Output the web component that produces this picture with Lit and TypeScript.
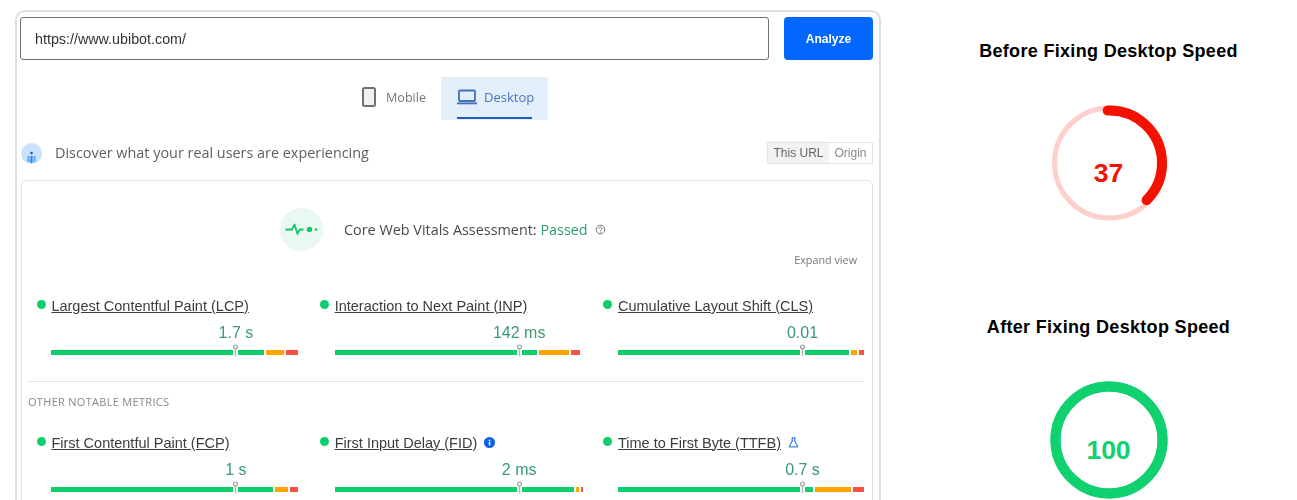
import { LitElement, html, css, svg, unsafeCSS } from 'lit';
import { customElement } from 'lit/decorators.js';

const GREEN = '#0cce6b';
const ORANGE = '#ffa400';
const RED = '#ff4e42';

type Metric = {
    label: string;
    value: string;
    segs: [number, number, number, number];
    badge?: 'info' | 'flask';
};

const coreMetrics: Metric[] = [
    { label: 'Largest Contentful Paint (LCP)', value: '1.7 s', segs: [182, 26, 18, 12] },
    { label: 'Interaction to Next Paint (INP)', value: '142 ms', segs: [182, 15, 30, 9] },
    { label: 'Cumulative Layout Shift (CLS)', value: '0.01', segs: [182, 44, 6, 5] },
];

const otherMetrics: Metric[] = [
    { label: 'First Contentful Paint (FCP)', value: '1 s', segs: [182, 35, 13, 8] },
    { label: 'First Input Delay (FID)', value: '2 ms', segs: [182, 52, 3, 2], badge: 'info' },
    { label: 'Time to First Byte (TTFB)', value: '0.7 s', segs: [182, 8, 36, 11], badge: 'flask' },
];

const phoneIcon = html`<svg width="16" height="22" viewBox="0 0 16 22">
    <rect x="2" y="2" width="12" height="18" rx="1.5" fill="#f1f1f1" stroke="#707070" stroke-width="2"></rect>
</svg>`;

const laptopIcon = html`<svg width="20" height="16" viewBox="0 0 20 16">
    <rect x="2" y="1.5" width="16" height="10.5" rx="1" fill="none" stroke="#3f6fb5" stroke-width="1.8"></rect>
    <rect x="0" y="13.5" width="20" height="1.8" fill="#3f6fb5"></rect>
</svg>`;

const cruxIcon = html`<svg width="21" height="21" viewBox="0 0 21 21">
    <circle cx="10.5" cy="10.5" r="10.5" fill="#c9e2fb"></circle>
    <circle cx="10.5" cy="10" r="1.3" fill="#1a56c4"></circle>
    <rect x="6.5" y="13" width="2" height="6" fill="#5aa5ee"></rect>
    <rect x="9.5" y="13" width="2" height="7" fill="#2f7fe0"></rect>
    <rect x="12.5" y="13" width="2" height="6" fill="#5aa5ee"></rect>
</svg>`;

const pulseIcon = html`<svg width="43" height="43" viewBox="0 0 43 43">
    <circle cx="21.5" cy="21.5" r="21.5" fill="#e9f9f1"></circle>
    <path d="M5.5 21.5h6.5l2.500-5 3 9.500 2-4.500h4" fill="none" stroke="#0fc768" stroke-width="1.800" stroke-linejoin="round"></path>
    <circle cx="29.500" cy="21.500" r="2.700" fill="#0fc768"></circle>
    <circle cx="36" cy="21.500" r="1.300" fill="#0fc768"></circle>
</svg>`;

const helpIcon = html`<svg width="11" height="11" viewBox="0 0 11 11">
    <circle cx="5.500" cy="5.500" r="4.300" fill="none" stroke="#777" stroke-width="1"></circle>
    <path d="M4 4.500a1.500 1.500 0 1 1 2.300 1.200c-.6.4-.8.6-.8 1.100" fill="none" stroke="#777" stroke-width=".9"></path>
    <circle cx="5.500" cy="8.200" r=".6" fill="#777"></circle>
</svg>`;

const infoIcon = html`<svg width="11" height="11" viewBox="0 0 11 11">
    <circle cx="5.500" cy="5.500" r="5.500" fill="#0b5fe8"></circle>
    <rect x="4.800" y="4.800" width="1.500" height="3.600" fill="#fff"></rect>
    <rect x="4.800" y="2.600" width="1.500" height="1.400" fill="#fff"></rect>
</svg>`;

const flaskIcon = html`<svg width="11" height="11" viewBox="0 0 11 11">
    <path d="M3.500 1h4M4.300 1v3L1.300 9.800h8.400L6.700 4V1" fill="none" stroke="#4a86e8" stroke-width="1.300" stroke-linejoin="round"></path>
</svg>`;

const pinIcon = svg`<svg width="7" height="12" viewBox="0 0 7 12">
    <rect x="2.800" y="4" width="1.400" height="8" fill="#b5b5b5"></rect>
    <circle cx="3.500" cy="3" r="2" fill="#fff" stroke="#9a9a9a" stroke-width="1.200"></circle>
</svg>`;

function gaugeRing(cx: number, percent: number, color: string, r: number, track: string, trackR: number, trackWidth: number, width: number) {
    const full = 2 * Math.PI * r;
    return html`<svg width="120" height="120" viewBox="0 0 120 120">
        <circle cx=${cx} cy="60" r=${trackR} fill="none" stroke=${track} stroke-width=${trackWidth}></circle>
        <circle cx=${cx} cy="60" r=${r} fill="none" stroke=${color} stroke-width=${width} stroke-linecap="round"
            stroke-dasharray="${(full * percent) / 100} ${full}" transform="rotate(-92 ${cx} 60)"></circle>
    </svg>`;
}

@customElement('app-root')
export class AppRoot extends LitElement {
    static styles = css`
        :host {
            display: block;
            width: 1297px;
            height: 500px;
            overflow: hidden;
            background: #fff;
            font-family: 'Liberation Sans', Arial, sans-serif;
        }

        .page {
            display: flex;
            align-items: flex-start;
            height: 500px;
            overflow: hidden;
        }

        .panel {
            box-sizing: border-box;
            flex: none;
            width: 866px;
            height: 560px;
            margin: 10px 0 0 15px;
            padding: 5px 6px 0 3px;
            border: 2px solid #e0e0e0;
            border-radius: 10px;
            filter: blur(0.6px);
        }

        .search {
            display: flex;
            gap: 15px;
            height: 43px;
        }

        .url {
            box-sizing: border-box;
            width: 749px;
            display: flex;
            align-items: center;
            padding-left: 14px;
            border: 1px solid #707070;
            border-radius: 3px;
            font-size: 14.300px;
            color: #333;
        }

        .analyze {
            flex: none;
            width: 89px;
            display: flex;
            align-items: center;
            justify-content: center;
            background: #0366ff;
            border-radius: 4px;
            color: #fff;
            font-size: 12px;
            font-weight: 700;
        }

        .tabs {
            display: flex;
            justify-content: center;
            margin-top: 17px;
            height: 43px;
        }

        .tab {
            box-sizing: border-box;
            position: relative;
            display: flex;
            align-items: center;
            font-family: 'Open Sans', sans-serif;
        }

        .tab.mobile {
            width: 96px;
            padding: 0 0 3px 16px;
            gap: 9px;
            color: #777;
            font-size: 12.600px;
        }

        .tab.desktop {
            width: 107px;
            padding: 0 0 3px 16px;
            gap: 7px;
            background: #e3eefb;
            color: #4a78bd;
            font-size: 13px;
        }

        .tab.desktop::after {
            content: '';
            position: absolute;
            left: 16px;
            bottom: 1px;
            width: 75px;
            height: 2px;
            background: #1f5cc0;
        }

        .discover {
            display: flex;
            align-items: center;
            height: 22px;
            margin-top: 22px;
            padding-left: 1px;
            color: #5f5f5f;
            font-family: 'Open Sans', sans-serif;
            font-size: 14.400px;
        }

        .discover-text {
            margin-left: 13px;
            padding-bottom: 2px;
        }

        .toggle {
            display: flex;
            margin-left: auto;
            height: 22px;
            border: 1px solid #e4e4e4;
            box-sizing: border-box;
            font-family: 'Liberation Sans', Arial, sans-serif;
            font-size: 12px;
            color: #666;
            line-height: 20px;
        }

        .toggle span {
            text-align: center;
        }

        .toggle .on {
            width: 61px;
            background: #f1f2f3;
        }

        .toggle .off {
            width: 43px;
            color: #888;
        }

        .results {
            box-sizing: border-box;
            margin: 16px 0 0 1px;
            height: 340px;
            padding-top: 27px;
            border: 1px solid #e2e2e2;
            border-radius: 6px;
        }

        .assessment {
            display: flex;
            align-items: center;
            margin-left: 258px;
            font-family: 'Open Sans', sans-serif;
            font-size: 14.400px;
            color: #4a4a4a;
        }

        .assessment-text {
            margin: 0 7px 0 21px;
        }

        .passed {
            color: #2f9d6b;
        }

        .expand {
            margin-top: 2px;
            padding-right: 15px;
            text-align: right;
            font-family: 'Open Sans', sans-serif;
            font-size: 10.800px;
            line-height: 14px;
            color: #777;
        }

        .metrics {
            display: grid;
            grid-template-columns: repeat(3, 283.300px);
            padding-left: 14.400px;
        }

        .metrics.core {
            margin-top: 30px;
        }

        .metrics.other {
            margin-top: 26px;
        }

        .metric {
            padding-left: 15px;
            position: relative;
        }

        .title-row {
            display: flex;
            align-items: center;
            height: 17px;
            gap: 7px;
            font-size: 14.500px;
            color: #3c3c3c;
        }

        .title-row a {
            text-decoration: underline;
        }

        .dot {
            position: absolute;
            left: 0.500px;
            top: 3px;
            width: 9px;
            height: 9px;
            border-radius: 50%;
            background: ${unsafeCSS(GREEN)};
        }

        .badge {
            display: flex;
        }

        .value {
            width: max-content;
            height: 18px;
            margin: 10px 0 8px 184.500px;
            transform: translateX(-50%);
            font-size: 16px;
            line-height: 18px;
            color: #3a9a70;
        }

        .bar {
            position: relative;
            display: flex;
            height: 5px;
        }

        .seg {
            flex: none;
            height: 5px;
            margin-right: 2px;
        }

        .seg:first-child {
            margin-right: 5px;
        }

        .pin {
            position: absolute;
            left: 181px;
            bottom: -1px;
            display: flex;
        }

        .rule {
            height: 1px;
            margin: 26px 8px 0 6px;
            background: #e3e3e8;
        }

        .other-heading {
            margin: 14px 0 0 6px;
            font-family: 'Open Sans', sans-serif;
            font-size: 11px;
            line-height: 12px;
            letter-spacing: 0.300px;
            color: #888;
            white-space: nowrap;
        }

        .speed {
            flex: none;
            width: 377px;
            margin-left: 39px;
            display: flex;
            flex-direction: column;
            align-items: center;
            padding-top: 42px;
        }

        .speed h2 {
            margin: 0;
            font-size: 18px;
            line-height: 18px;
            letter-spacing: 0.320px;
            color: #000;
            white-space: nowrap;
        }

        .gauge {
            display: grid;
            place-items: center;
            width: 120px;
            height: 120px;
            margin-top: 43px;
        }

        .gauge > * {
            grid-area: 1 / 1;
        }

        .gauge span {
            padding-top: 20px;
            font-size: 26.500px;
            font-weight: 700;
        }

        .gauge.bad span {
            color: #f51100;
        }

        .gauge.good {
            margin-top: 44px;
        }

        .gauge.good span {
            color: #0fd170;
        }

        .speed h2.after {
            margin-top: 95px;
        }
    `;

    renderMetric(m: Metric) {
        const colors = [GREEN, GREEN, ORANGE, RED];
        return html`
            <div class="metric">
                <span class="dot"></span>
                <div class="title-row">
                    <a>${m.label}</a>
                    ${m.badge
                        ? html`<span class="badge">${m.badge === 'info' ? infoIcon : flaskIcon}</span>`
                        : null}
                </div>
                <div class="value">${m.value}</div>
                <div class="bar">
                    ${m.segs.map(
                        (w, i) => html`<span class="seg" style="width:${w}px;background:${colors[i]}"></span>`
                    )}
                    <span class="pin">${pinIcon}</span>
                </div>
            </div>
        `;
    }

    render() {
        return html`
            <div class="page">
                <section class="panel">
                    <div class="search">
                        <div class="url">https://www.ubibot.com/</div>
                        <div class="analyze">Analyze</div>
                    </div>
                    <div class="tabs">
                        <div class="tab mobile">${phoneIcon}<span>Mobile</span></div>
                        <div class="tab desktop">${laptopIcon}<span>Desktop</span></div>
                    </div>
                    <div class="discover">
                        ${cruxIcon}
                        <span class="discover-text">Discover what your real users are experiencing</span>
                        <div class="toggle">
                            <span class="on">This URL</span>
                            <span class="off">Origin</span>
                        </div>
                    </div>
                    <div class="results">
                        <div class="assessment">
                            ${pulseIcon}
                            <span class="assessment-text">Core Web Vitals Assessment: <span class="passed">Passed</span></span>
                            ${helpIcon}
                        </div>
                        <div class="expand">Expand view</div>
                        <div class="metrics core">${coreMetrics.map(m => this.renderMetric(m))}</div>
                        <div class="rule"></div>
                        <div class="other-heading">OTHER NOTABLE METRICS</div>
                        <div class="metrics other">${otherMetrics.map(m => this.renderMetric(m))}</div>
                    </div>
                </section>
                <aside class="speed">
                    <h2>Before Fixing Desktop Speed</h2>
                    <div class="gauge bad">
                        ${gaugeRing(60.5, 38, '#f51100', 52.5, '#ffcfcb', 55, 5, 10)}
                        <span>37</span>
                    </div>
                    <h2 class="after">After Fixing Desktop Speed</h2>
                    <div class="gauge good">
                        ${gaugeRing(60, 100, '#0fd170', 53.5, '#0fd170', 53.5, 10, 10)}
                        <span>100</span>
                    </div>
                </aside>
            </div>
        `;
    }
}
